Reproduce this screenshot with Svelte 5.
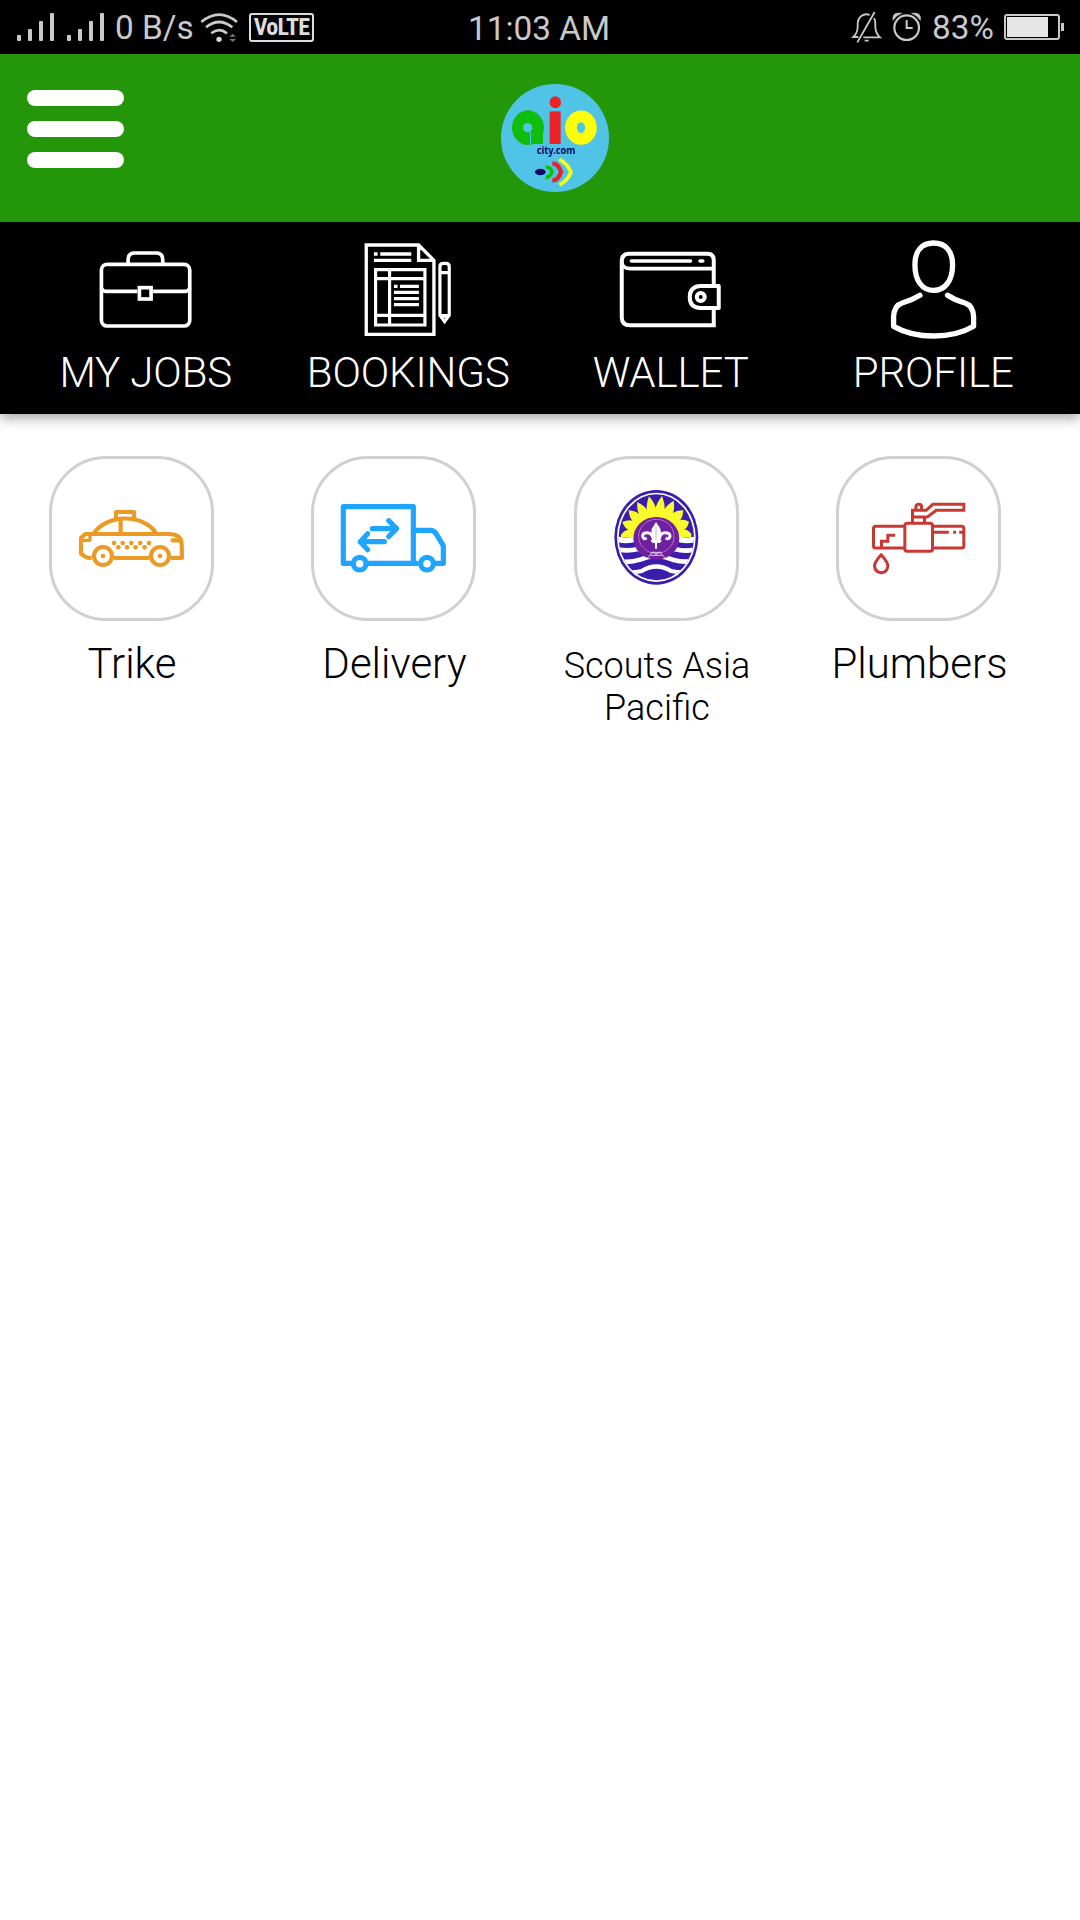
<script>
  const nav = [
    { id: 'jobs', label: 'MY JOBS', box: '168.75 30 300 345' },
    { id: 'bookings', label: 'BOOKINGS', box: '206.25 30 300 345' },
    { id: 'wallet', label: 'WALLET', box: '153.75 30 300 345' },
    { id: 'profile', label: 'PROFILE', box: '161.25 30 300 345' },
  ];
  const services = [
    { id: 'trike', label: 'Trike', box: '36 57 477 477' },
    { id: 'delivery', label: 'Delivery', box: '42 57 477 477' },
    { id: 'scouts', label: 'Scouts Asia Pacific', box: '81 57 477 477', small: true },
    { id: 'plumbers', label: 'Plumbers', box: '56.5 57 477 477' },
  ];

  // Sunburst of the scouts emblem: leaf-shaped rays that meet in valleys around the inner disc
  const tips = [[213, 284], [217, 246], [236, 211], [262, 186], [297, 169], [336, 168], [371, 182], [400, 211], [417, 245], [424, 282]];
  const valleys = tips.slice(0, -1).map(([x, y], i) => {
    const [nx, ny] = tips[i + 1];
    const dx = (x + nx) / 2 - 319;
    const dy = (y + ny) / 2 - 290;
    const d = Math.hypot(dx, dy);
    return [319 + (dx / d) * 86, 290 + (dy / d) * 86];
  });
  // Control point on a ray's side, pushed outwards so that the side bulges slightly
  const side = (tip, valley) => {
    const x = valley[0] + (tip[0] - 319) * 0.11;
    const y = valley[1] + (tip[1] - 290) * 0.11;
    return `${x.toFixed(1)} ${y.toFixed(1)}`;
  };
  let rays = 'M213 291 L213 284';
  valleys.forEach((v, i) => {
    const next = tips[i + 1];
    rays += ` Q${side(tips[i], v)} ${v[0].toFixed(1)} ${v[1].toFixed(1)} Q${side(next, v)} ${next[0]} ${next[1]}`;
  });
  rays += ' L424 291 Q319 296 213 291Z';

  const dots = [[222, 309], [248, 309], [274, 309], [301, 309], [327, 309], [235, 322], [261, 322], [287, 322], [314, 322]];
</script>

<div class="screen">
  <div class="status">
    <svg class="signal" viewBox="0 0 90 30" width="90" height="30">
      <g fill="#c9c9c9">
        <rect x="1" y="23" width="4" height="6" rx="1" /><rect x="12" y="17" width="4" height="12" rx="1" />
        <rect x="23" y="9" width="4" height="20" rx="1" /><rect x="34" y="1" width="4" height="28" rx="1" />
        <rect x="51" y="23" width="4" height="6" rx="1" /><rect x="62" y="17" width="4" height="12" rx="1" />
        <rect x="73" y="9" width="4" height="20" rx="1" /><rect x="84" y="1" width="4" height="28" rx="1" />
      </g>
    </svg>
    <span class="speed">0 B/s</span>
    <svg class="wifi" viewBox="598 33 117 93" width="39" height="31">
      <g fill="none" stroke="#c9c9c9" stroke-width="8">
        <path d="M602 63Q655 19 709 63" /><path d="M616 79Q655 47 695 79" /><path d="M632 97Q655 78 679 97" />
      </g>
      <circle cx="655" cy="115" r="8" fill="#d8d8d8" />
      <path d="M686 107L696 98L706 107ZM686 114L696 123L706 114Z" fill="#777" />
    </svg>
    <span class="volte">VoLTE</span>
    <span class="clock">11:03 AM</span>
    <div class="right">
      <svg viewBox="94 34 210 96" width="70" height="32">
        <g fill="none" stroke="#c9c9c9" stroke-width="5.5">
          <path d="M147 46Q134 40 122 49Q110 58 111 78Q112 99 98 112H113M128 113H178Q165 101 164 83V70Q164 62 160 56M110 128L162 37M132 123H144" />
          <circle cx="258" cy="84" r="37" stroke-width="6.5" />
          <path d="M258 61V85H276" stroke-width="6" />
        </g>
        <path d="M217 62Q213 36 243 41Q226 47 217 62ZM299 62Q303 36 273 41Q290 47 299 62Z" fill="#c9c9c9" stroke="#c9c9c9" stroke-width="2" />
      </svg>
      <span class="percent">83%</span>
      <svg class="battery" viewBox="0 0 60 26" width="60" height="26">
        <rect x="1" y="1" width="54" height="24" rx="2" fill="none" stroke="#c9c9c9" stroke-width="2" />
        <rect x="3" y="3" width="41" height="20" fill="#e6e6e6" /><rect x="57" y="9" width="3" height="8" fill="#c9c9c9" />
      </svg>
    </div>
  </div>

  <header>
    <div class="menu"><i></i><i></i><i></i></div>
    <svg class="logo" viewBox="183 252 324 324" width="108" height="108">
      <circle cx="345" cy="414" r="162" fill="#50c4e6" />
      <g fill="#0fbd0b"><ellipse cx="264" cy="383" rx="48" ry="52" /><rect x="264" y="380" width="45" height="52" /></g>
      <circle cx="263" cy="383" r="14" fill="#50c4e6" /><rect x="270" y="395" width="3" height="40" fill="#50c4e6" />
      <g fill="#ea2328"><ellipse cx="346" cy="307" rx="17" ry="18" /><rect x="329" y="334" width="33" height="98" /></g>
      <ellipse cx="423" cy="383" rx="30" ry="34" fill="none" stroke="#ffff0a" stroke-width="35" />
      <text x="348" y="461" text-anchor="middle" textLength="116" lengthAdjust="spacingAndGlyphs">city.com</text>
      <ellipse cx="301" cy="516" rx="16" ry="10" fill="#0b0b66" />
      <g fill="none">
        <path d="M317 501Q331 500 336 516Q331 532 317 532" stroke="#0fbd0b" stroke-width="11" />
        <path d="M337 490Q356 491 363 516Q356 540 337 542" stroke="#ea2328" stroke-width="13" />
        <path d="M358 478Q384 492 393 517Q384 541 358 555" stroke="#ffff0a" stroke-width="11" />
      </g>
    </svg>
  </header>

  <nav>
    {#each nav as item}
      <div class="tab">
        <svg viewBox={item.box} width="100" height="115" fill="none" stroke="#fff" stroke-width="11">
          {#if item.id === 'jobs'}
            <rect x="185" y="133" width="265" height="185" rx="17" />
            <path d="M265 133V119Q265 99 285 99H349Q369 99 369 119V133" />
            <path d="M185 204Q188 214 198 214H293M340 214H437Q447 214 450 204" />
            <rect x="299" y="203" width="35" height="34" />
          {:else if item.id === 'bookings'}
            <path d="M228 75H385L431 121V343H228ZM385 75V121H431" stroke-width="10" />
            <path d="M251 102H262M270 102H363M251 121H363M311 199H322M329 199H386M311 217H386M311 236H386M311 254H386" stroke-width="10" />
            <path d="M256 149H404V315H256ZM256 176H404M256 286H404M298 149V315" stroke-width="9.5" />
            <path d="M449 286V140Q449 130 459 130H467Q477 130 477 140V286L463 305ZM449 158H477M449 287H477" stroke-width="9.5" />
            <path d="M455 293H471L463 307Z" stroke-width="3" />
          {:else if item.id === 'wallet'}
            <path d="M432 193V121Q432 101 413 101H179Q156 101 156 124V292Q156 316 181 316H432V266" stroke-width="12" />
            <path d="M156 124Q156 146 181 146H432" />
            <path d="M185 123H362M391 123H399" stroke-linecap="round" />
            <path d="M447 198H392Q360 200 360 231Q360 263 392 264H447Z" stroke-width="12" stroke-linejoin="round" />
            <circle cx="393" cy="231" r="12" stroke-width="12" />
          {:else}
            <path d="M310 69C276 69 254 91 254 134C254 184 277 211 310 211C343 211 367 184 367 134C367 91 344 69 310 69Z" stroke-width="16" />
            <path d="M269 226C250 238 235 244 216 249Q192 256 190 290V319Q240 348 310 348Q382 348 430 319V290Q428 256 404 249C384 244 370 238 352 226" stroke-width="16" stroke-linecap="round" stroke-linejoin="round" />
          {/if}
        </svg>
        <span>{item.label}</span>
      </div>
    {/each}
  </nav>

  <main>
    {#each services as item}
      <div class="service">
        <div class="tile">
          <svg viewBox={item.box} width="159" height="159" fill="none">
            {#if item.id === 'trike'}
              <g stroke="#eb9b23" stroke-width="12.5" stroke-linejoin="round">
                <path d="M155 354H148Q139 354 123 341V294L136 282H386Q424 282 425 312L426 354H393M221 354H327" />
                <path d="M160 282C200 221 312 219 350 282M242 236V282M228 237V216H282V237" />
                <path d="M123 301H150V286" stroke-width="10" />
                <path d="M420 301H398" stroke-linecap="round" />
                <circle cx="189" cy="348" r="27" /><circle cx="360" cy="348" r="27" />
              </g>
              <g fill="#eb9b23">
                <circle cx="189" cy="348" r="7" /><circle cx="360" cy="348" r="7" />
                {#each dots as [x, y]}<circle cx={x} cy={y} r="7" />{/each}
              </g>
            {:else if item.id === 'delivery'}
              <g stroke="#1ea5ff" stroke-width="15.5" stroke-linejoin="round">
                <path d="M155 370H130V200H340V370M204 370H355M340 271H392Q402 271 408 281L430 317V370H405" />
                <circle cx="179" cy="371" r="19" /><circle cx="381" cy="371" r="19" />
                <path d="M217 266H288M266 242L290 266L266 290M253 305H181M203 281L181 305L203 329" stroke-linecap="round" />
              </g>
            {:else if item.id === 'scouts'}
              <ellipse cx="319" cy="292" rx="126" ry="142" fill="#3a1eab" />
              <ellipse cx="319" cy="292" rx="118" ry="134" fill="#fff" />
              <clipPath id="disc"><ellipse cx="319" cy="292" rx="113" ry="129" /></clipPath>
              <g clip-path="url(#disc)">
                <rect x="200" y="150" width="240" height="285" fill="#3a1eab" />
                <path d={rays} fill="#f9f92b" />
                <g stroke="#fff" stroke-width="14">
                  <path d="M200 297Q230 306 260 296H380Q408 306 440 297" stroke-width="17" />
                  <path d="M200 327Q230 335 265 327Q319 360 374 327Q408 337 440 327" />
                  <path d="M200 363Q238 370 270 359Q319 338 368 359Q405 370 440 361" />
                  <path d="M210 394Q245 401 275 393Q319 366 363 393Q400 401 430 392" stroke-width="13" />
                </g>
              </g>
              <ellipse cx="319" cy="295" rx="69" ry="64" fill="#701fa0" />
              <ellipse cx="319" cy="289" rx="53" ry="51" stroke="#c9a4da" stroke-width="3" stroke-dasharray="4 2" />
              <path d="M318 246Q310 260 305 266Q302 285 313 301H325Q336 285 331 266Q326 258 318 246Z" fill="#fff" />
              <path d="M312 309Q309 278 293 278Q277 278 278 289Q280 300 290 294M326 309Q328 278 344 278Q361 278 360 289Q357 300 347 294" stroke="#fff" stroke-width="9" />
              <path d="M303 303H334M318 300V326" stroke="#fff" stroke-width="6" />
              <path d="M318 258V300" stroke="#b98bcc" stroke-width="2" />
              <path d="M301 345Q303 334 311 337L318 344L326 337Q334 334 336 345M303 337H334M302 346H335" stroke="#dfc8e8" stroke-width="3" />
              <path d="M292 354L302 344M346 354L335 344" stroke="#dfc8e8" stroke-width="3" />
            {:else}
              <g stroke="#c73a34" stroke-width="9" stroke-linejoin="round">
                <rect x="254" y="250" width="83" height="84" rx="7" />
                <path d="M254 259H167Q160 259 160 266V317Q160 324 167 324H254M337 259H424Q431 259 431 266V317Q431 324 424 324H337" />
                <path d="M337 277H386M399 277H408M417 277H431M184 324V304H203V286H225" stroke-linejoin="miter" />
                <path d="M277 250V211H318L338 193H431V211H348L322 231H277M313 231V250M287 210V200Q288 193 296 193Q304 193 304 200V210" stroke-linejoin="miter" />
                <path d="M183 344Q163 366 163 378Q165 397 183 398Q202 397 203 378Q203 366 183 344Z" />
              </g>
            {/if}
          </svg>
        </div>
        <span class:small={item.small}>{item.label}</span>
      </div>
    {/each}
  </main>
</div>

<style>
  :global(body) { background: #fff; }
  .screen { width: 1080px; height: 1920px; overflow: hidden; font-family: Roboto, sans-serif; background: #fff; }
  svg { display: block; flex: none; overflow: visible; }
  .status { height: 54px; background: #000; color: #c9c9c9; display: flex; align-items: center; font-size: 33.3px; line-height: 54px; white-space: nowrap; }
  .signal { margin: 0 0 1px 16px; }
  .speed { width: 86px; margin-left: 9px; }
  .speed, .clock, .percent { padding-top: 1px; box-sizing: border-box; height: 54px; }
  .clock { padding-top: 2px; }
  .wifi { margin-left: -1px; }
  .volte { box-sizing: border-box; width: 65px; height: 29px; margin-left: 10px; border: 2px solid #ddd; border-radius: 3px; font: 700 24px/25px "Roboto Condensed", Roboto, sans-serif; color: #ddd; display: flex; justify-content: center; letter-spacing: -.7px; }
  .clock { width: 150px; margin-left: 154px; }
  .right { margin-left: auto; margin-right: 16px; display: flex; align-items: center; }
  .percent { width: 62px; margin: 0 10px 0 10px; }
  header { position: relative; z-index: 1; box-sizing: border-box; height: 168px; background: #24960a; display: flex; align-items: flex-start; }
  .menu { width: 97px; margin: 36px 0 0 26.5px; display: flex; flex-direction: column; gap: 15px; }
  .menu i { height: 16px; border-radius: 8px; background: #fff; }
  .logo { margin: 30px 0 0 377.5px; }
  .logo text { font: 700 31px "Noto Sans", sans-serif; fill: #0b0b66; }
  nav { box-sizing: border-box; height: 192px; padding: 8px 15px 0; background: #000; color: #fff; display: grid; grid-template-columns: repeat(4, 1fr); box-shadow: 0 4px 12px rgba(0, 0, 0, .36); }
  .tab { display: flex; flex-direction: column; align-items: center; font-weight: 300; font-size: 42px; line-height: 49px; letter-spacing: -.1px; }
  .tab span { margin: 3px 1px 0 0; }
  main { width: 1050px; padding-top: 42px; display: grid; grid-template-columns: repeat(4, 1fr); }
  .service { display: flex; flex-direction: column; align-items: center; text-align: center; color: #000; font-weight: 300; font-size: 42px; line-height: 49px; }
  .service span { padding-left: 1.5px; }
  .tile { box-sizing: border-box; width: 165px; height: 165px; border: 3px solid #d0d0d0; border-radius: 57px; margin-bottom: 18px; }
  .service .small { width: 210px; margin-top: 6px; font-size: 36px; line-height: 42px; }
</style>
